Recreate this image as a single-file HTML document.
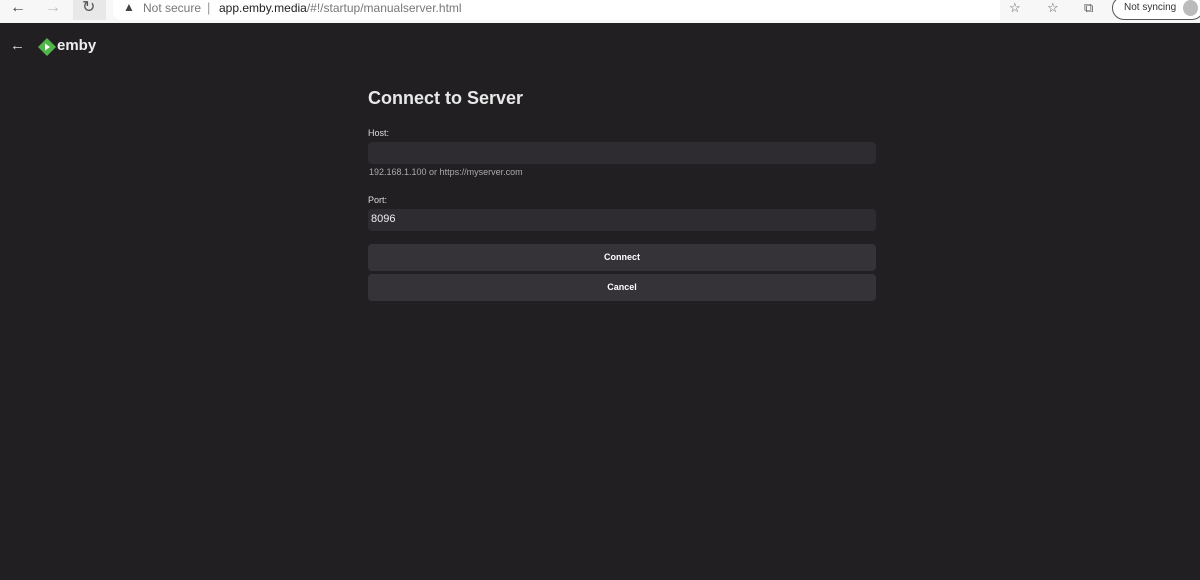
<!DOCTYPE html>
<html><head><style>
body{margin:0;width:1200px;height:580px;background:#211f22;font-family:"Liberation Sans",sans-serif;position:relative;overflow:hidden;color:#e6e6e6}
.bar{position:absolute;left:0;top:0;width:1200px;height:23px;background:#f7f7f7}
.url{position:absolute;left:113px;top:0;width:887px;height:20px;background:#fff;border-radius:0 0 0 8px}
.t{position:absolute;white-space:nowrap}
.in{position:absolute;left:368px;width:508px;background:#2e2c30;border-radius:4px}
.btn{position:absolute;left:368px;width:508px;height:27px;background:#353238;border-radius:4px;font-size:9px;font-weight:bold;text-align:center;line-height:27px;color:#fff}
</style></head><body>
<div class="bar"></div>
<div style="position:absolute;left:73px;top:0;width:33px;height:20px;background:#e8e8e8"></div>
<div class="url"></div>
<div class="t" style="left:10px;top:0;font-size:16px;color:#444;line-height:16px">&#8592;</div>
<div class="t" style="left:45px;top:0;font-size:16px;color:#bbb;line-height:16px">&#8594;</div>
<div class="t" style="left:82px;top:-1px;font-size:16px;color:#555;line-height:17px">&#8635;</div>
<div class="t" style="left:123px;top:0;font-size:12px;color:#444;line-height:15px">&#9650;</div>
<div class="t" style="left:143px;top:1px;font-size:12px;color:#777">Not secure</div>
<div class="t" style="left:207px;top:0;font-size:13px;color:#999">|</div>
<div class="t" style="left:219px;top:1px;font-size:12px;color:#222">app.emby.media<span style="color:#777">/#!/startup/manualserver.html</span></div>
<div class="t" style="left:1009px;top:0;font-size:13px;color:#555">&#9734;</div>
<div class="t" style="left:1047px;top:0;font-size:13px;color:#555">&#9734;</div>
<div class="t" style="left:1084px;top:0;font-size:13px;color:#555">&#10697;</div>
<div style="position:absolute;left:1112px;top:-4px;width:90px;height:22px;border:1px solid #555;border-radius:12px;background:#fff"></div>
<div class="t" style="left:1124px;top:2px;font-size:10px;color:#333">Not syncing</div>
<div style="position:absolute;left:1183px;top:0;width:15px;height:16px;border-radius:50%;background:#bbb"></div>
<div class="t" style="left:10px;top:37px;font-size:15px;color:#ddd">&#8592;</div>
<svg style="position:absolute;left:38px;top:38px" width="18" height="18" viewBox="0 0 18 18"><path d="M9 0L18 9 9 18 0 9Z" fill="#52b54b"/><path d="M7 5.5L12 9 7 12.5Z" fill="#fff"/></svg>
<div class="t" style="left:57px;top:37px;font-size:15px;font-weight:bold;color:#eee">emby</div>
<div class="t" style="left:368px;top:88px;font-size:18px;font-weight:bold;color:#e8e8e8">Connect to Server</div>
<div class="t" style="left:368px;top:128px;font-size:9px;color:#ddd">Host:</div>
<div class="in" style="top:142px;height:22px"></div>
<div class="t" style="left:369px;top:167px;font-size:9px;color:#aaa">192.168.1.100 or https://myserver.com</div>
<div class="t" style="left:368px;top:195px;font-size:9px;color:#ddd">Port:</div>
<div class="in" style="top:209px;height:22px"></div>
<div class="t" style="left:371px;top:213px;font-size:11px;color:#eee">8096</div>
<div class="btn" style="top:244px">Connect</div>
<div class="btn" style="top:274px">Cancel</div>
</body></html>
